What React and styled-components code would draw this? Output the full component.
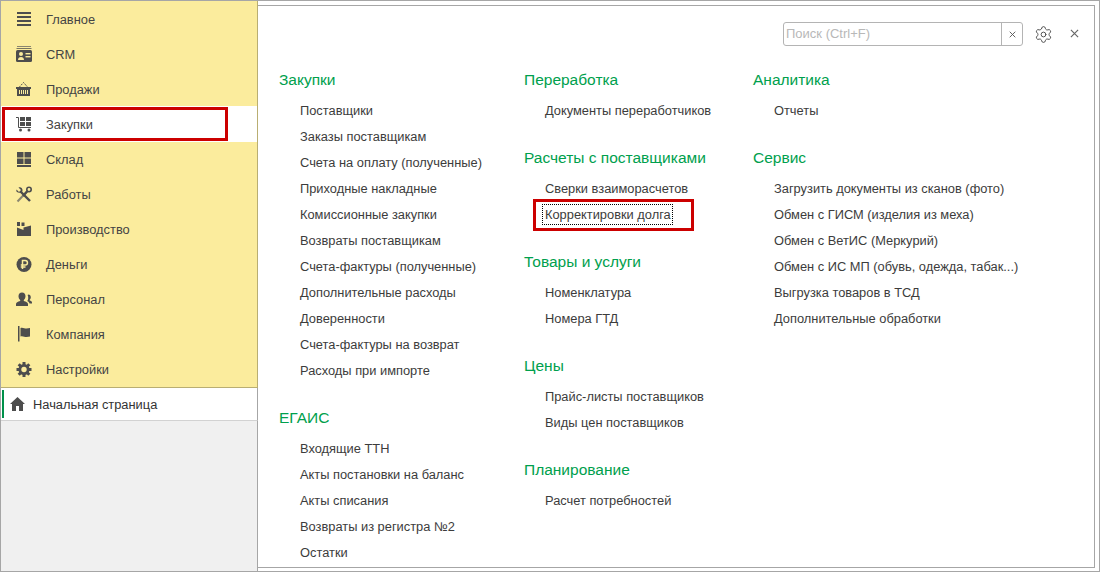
import React from 'react';
import styled, {createGlobalStyle} from 'styled-components';
import {Settings} from 'lucide-react';

const GlobalStyle = createGlobalStyle`
  html, body {
    margin: 0;
    padding: 0;
    background: #fff;
  }
  body {
    font-family: "Liberation Sans", Arial, sans-serif;
  }
`;

const Frame = styled.div`
  box-sizing: border-box;
  width: 1100px;
  height: 572px;
  border: 1px solid #a6a6a6;
  display: flex;
  overflow: hidden;
  background: #fff;
`;

const Sidebar = styled.aside`
  width: 257px;
  flex: none;
  display: flex;
  flex-direction: column;
`;

const Sections = styled.nav`
  background: #fbec9d;
  padding-top: 1px;
  border-right: 1px solid #b9ae72;
  border-bottom: 1px solid #b9ae72;
`;

const SectionRow = styled.div`
  position: relative;
  height: 35px;
  display: flex;
  align-items: center;
  padding-left: 14px;
  gap: 13px;
  font-size: 12.85px;
  color: #444;
  background: ${p => (p.$active ? '#fff' : 'transparent')};
  box-shadow: ${p => (p.$active ? '0 -1px 0 #fff' : 'none')};
  svg {
    flex: none;
  }
`;

const RedMark = styled.span`
  position: absolute;
  box-sizing: border-box;
  border: 3px solid #cc0000;
  pointer-events: none;
`;

const SideMark = styled(RedMark)`
  left: 1px;
  top: 0;
  width: 226px;
  height: 34px;
`;

const HomeTab = styled.div`
  height: 32px;
  display: flex;
  align-items: center;
  background: #fff;
  border-right: 1px solid #a6a6a6;
  border-bottom: 1px solid #d2d2d2;
  font-size: 12.85px;
  color: #333;
`;

const GreenBar = styled.span`
  width: 2px;
  height: 28px;
  margin-left: 1px;
  margin-right: 6px;
  background: #00904a;
`;

const HomeLabel = styled.span`
  margin-left: 8px;
`;

const SideRest = styled.div`
  flex: 1;
  background: #f0f0f0;
  border-right: 1px solid #a6a6a6;
`;

const Main = styled.main`
  flex: 1;
  min-width: 0;
  padding: 4px 4px 3px 0;
  display: flex;
`;

const Panel = styled.section`
  flex: 1;
  min-width: 0;
  border: 1px solid #a6a6a6;
  border-left: none;
  overflow: hidden;
`;

const Toolbar = styled.div`
  height: 56px;
  box-sizing: border-box;
  padding: 16px 14px 0 0;
  display: flex;
  justify-content: flex-end;
  align-items: flex-start;
`;

const Search = styled.div`
  box-sizing: border-box;
  width: 240px;
  height: 24px;
  border: 1px solid #b4b4b4;
  border-radius: 3px;
  display: flex;
  font-size: 13px;
  color: #b8b8b8;
`;

const SearchText = styled.div`
  flex: 1;
  line-height: 22px;
  padding-left: 2px;
`;

const SearchClear = styled.div`
  width: 20px;
  border-left: 1px solid #b4b4b4;
  display: flex;
  align-items: center;
  justify-content: center;
`;

const GearButton = styled.div`
  display: flex;
  margin: 3px 16px 0 11px;
  color: #4d4d4d;
`;

const CloseButton = styled.div`
  width: 11px;
  height: 11px;
  margin-top: 6px;
  display: flex;
  align-items: center;
  justify-content: center;
`;

const Columns = styled.div`
  display: grid;
  grid-template-columns: 245px 229px 1fr;
  padding-left: 21px;
`;

const Column = styled.div`
  display: flex;
  flex-direction: column;
  gap: 16px;
`;

const Heading = styled.h3`
  margin: 0;
  height: 36px;
  line-height: 35px;
  font-size: 15.5px;
  font-weight: normal;
  color: #00a04d;
`;

const Item = styled.div`
  position: relative;
  height: 26px;
  line-height: 26px;
  padding-left: 21px;
  font-size: 12.85px;
  color: #3c3c3c;
  white-space: nowrap;
`;

const FocusText = styled.span`
  display: inline-block;
  line-height: 19px;
  outline: 1px dotted #000;
  outline-offset: 0;
  padding: 0 1px 0 2px;
  margin-left: -2px;
`;

const ItemMark = styled(RedMark)`
  left: 9px;
  top: -3px;
  width: 161px;
  height: 32px;
`;

const fill = '#4d4d4d';

const Icon = ({children}) => (
  <svg width="18" height="17" viewBox="0 0 18 17" fill={fill}>{children}</svg>
);

const MenuIcon = () => (
  <Icon>
    <rect x="2" y="1" width="14" height="2"/>
    <rect x="2" y="5" width="14" height="2"/>
    <rect x="2" y="9" width="14" height="2"/>
    <rect x="2" y="13" width="14" height="2"/>
  </Icon>
);

const CrmIcon = () => (
  <Icon>
    <rect x="2" y="0" width="14" height="1" fill="#8a8670"/>
    <rect x="1.5" y="2" width="15" height="1" fill="#77745f"/>
    <rect x="1" y="4" width="16" height="12" rx="1.5"/>
    <circle cx="6" cy="8" r="2" fill="#fbec9d"/>
    <path d="M3 14c0-2 1.2-3 3-3s3 1 3 3z" fill="#fbec9d"/>
    <rect x="10.5" y="7" width="5" height="1.4" fill="#fbec9d"/>
    <rect x="10.5" y="10" width="5" height="1.4" fill="#fbec9d"/>
  </Icon>
);

const BasketIcon = () => (
  <Icon>
    <path d="M4 6.5 8.5 1.5 13 6.5" fill="none" stroke={fill} strokeDasharray="2 1"/>
    <rect x="1" y="6" width="15" height="2"/>
    <rect x="2" y="8" width="13" height="7"/>
    <path d="M4.5 9v4M6.5 9v4M8.5 9v4M10.5 9v4M12.5 9v4" stroke="#fbec9d"/>
  </Icon>
);

const CartIcon = () => (
  <Icon>
    <path d="M1 1.5h2.5v10H16" fill="none" stroke={fill}/>
    <rect x="5" y="1" width="5" height="4"/>
    <rect x="11" y="1" width="5" height="4"/>
    <rect x="5" y="6" width="5" height="4"/>
    <rect x="11" y="6" width="5" height="4"/>
    <circle cx="5.5" cy="14" r="1.5"/>
    <circle cx="14" cy="14" r="1.5"/>
  </Icon>
);

const StockIcon = () => (
  <Icon>
    <rect x="2" y="1" width="6.5" height="5.5"/>
    <rect x="9.5" y="1" width="6.5" height="5.5"/>
    <rect x="2" y="7.5" width="6.5" height="5.5"/>
    <rect x="9.5" y="7.5" width="6.5" height="5.5"/>
    <rect x="2" y="14" width="14" height="2"/>
  </Icon>
);

const ToolsIcon = () => (
  <Icon>
    <path d="M2.5 15.500 12 5.500" stroke="#8a8670" strokeWidth="2" fill="none"/>
    <path d="M6 6 15 15" stroke={fill} strokeWidth="2.400" fill="none"/>
    <path d="M1.500 3.500 4 6l2-2-2.500-2.500C5.500.5 8 2 7.500 5L6 7 3 6.500C1.500 6 1 5 1.500 3.500z"/>
    <circle cx="14" cy="3.500" r="2.200" fill="none" stroke={fill} strokeWidth="1.600"/>
    <path d="M12.500 5 8 10" stroke={fill} strokeWidth="2.200"/>
  </Icon>
);

const FactoryIcon = () => (
  <Icon>
    <path d="M2 1h3v4H2zM6.500 1.500h3V5h-3z"/>
    <path d="M2 15V6.500l6.500 2.500V6.500L16 4.500V15z"/>
  </Icon>
);

const RubleIcon = () => (
  <Icon>
    <circle cx="9" cy="8.500" r="7.500"/>
    <path d="M7.500 13V4.500H10.200a2.200 2.200 0 0 1 0 4.500H5.800M5.800 11H10.500" fill="none" stroke="#fbec9d" strokeWidth="1.500"/>
  </Icon>
);

const StaffIcon = () => (
  <Icon>
    <path d="M7 1.500c2.200 0 3.500 1.600 3.500 3.700 0 1.500-.7 3-1.700 3.800v1c2.400.6 4.200 1.700 4.200 3v2H1v-2c0-1.300 1.800-2.400 4.200-3V9c-1-.8-1.700-2.300-1.700-3.800 0-2.100 1.300-3.700 3.500-3.700z"/>
    <path d="M13.500 3.500c1.400 0 2.300 1.200 2.300 2.700 0 1-.5 2-1.100 2.500v.8c1.300.4 2.300 1 2.300 2v1h-2.500c-.3-1-1-1.800-2.300-2.400.7-1 1.100-2.100 1-3.400 0-1-.1-1.800-.6-2.600.3-.4.500-.6.900-.6z"/>
  </Icon>
);

const FlagIcon = () => (
  <Icon>
    <rect x="3" y="0" width="1.500" height="15.500"/>
    <path d="M5.500 2c2.200-.8 4 .6 6 .6 1.300 0 2.300-.4 3.500-.6v8.500c-1.200.2-2.200.6-3.500.6-2 0-3.800-1.400-6-.6z"/>
  </Icon>
);

const GearIcon = () => (
  <Icon>
    {[0, 45, 90, 135].map(a => (
      <rect key={a} x="7.500" y="1" width="3" height="15" transform={`rotate(${a} 9 8.500)`}/>
    ))}
    <circle cx="9" cy="8.500" r="5.500"/>
    <circle cx="9" cy="8.500" r="2.700" fill="#fbec9d"/>
  </Icon>
);

const HomeIcon = () => (
  <svg width="15" height="14" viewBox="0 0 15 14" fill={fill}>
    <path d="M7.500 0 15 7h-2v7H9V9H6v5H2V7H0z"/>
  </svg>
);

const Cross = ({size, color}) => (
  <svg width={size} height={size} viewBox="0 0 10 10" stroke={color} strokeWidth="1.300" fill="none">
    <path d="M1 1 9 9M9 1 1 9"/>
  </svg>
);

const sections = [
  {title: 'Главное', icon: <MenuIcon/>},
  {title: 'CRM', icon: <CrmIcon/>},
  {title: 'Продажи', icon: <BasketIcon/>},
  {title: 'Закупки', icon: <CartIcon/>, active: true},
  {title: 'Склад', icon: <StockIcon/>},
  {title: 'Работы', icon: <ToolsIcon/>},
  {title: 'Производство', icon: <FactoryIcon/>},
  {title: 'Деньги', icon: <RubleIcon/>},
  {title: 'Персонал', icon: <StaffIcon/>},
  {title: 'Компания', icon: <FlagIcon/>},
  {title: 'Настройки', icon: <GearIcon/>},
];

const columns = [
  [
    {title: 'Закупки', items: ['Поставщики', 'Заказы поставщикам', 'Счета на оплату (полученные)', 'Приходные накладные', 'Комиссионные закупки', 'Возвраты поставщикам', 'Счета-фактуры (полученные)', 'Дополнительные расходы', 'Доверенности', 'Счета-фактуры на возврат', 'Расходы при импорте']},
    {title: 'ЕГАИС', items: ['Входящие ТТН', 'Акты постановки на баланс', 'Акты списания', 'Возвраты из регистра №2', 'Остатки']},
  ],
  [
    {title: 'Переработка', items: ['Документы переработчиков']},
    {title: 'Расчеты с поставщиками', items: ['Сверки взаиморасчетов', 'Корректировки долга']},
    {title: 'Товары и услуги', items: ['Номенклатура', 'Номера ГТД']},
    {title: 'Цены', items: ['Прайс-листы поставщиков', 'Виды цен поставщиков']},
    {title: 'Планирование', items: ['Расчет потребностей']},
  ],
  [
    {title: 'Аналитика', items: ['Отчеты']},
    {title: 'Сервис', items: ['Загрузить документы из сканов (фото)', 'Обмен с ГИСМ (изделия из меха)', 'Обмен с ВетИС (Меркурий)', 'Обмен с ИС МП (обувь, одежда, табак...)', 'Выгрузка товаров в ТСД', 'Дополнительные обработки']},
  ],
];

const FOCUSED = 'Корректировки долга';

export default function App() {
  return (
    <Frame>
      <GlobalStyle/>
      <Sidebar>
        <Sections>
          {sections.map(s => (
            <SectionRow key={s.title} $active={s.active}>
              {s.icon}
              <span>{s.title}</span>
              {s.active && <SideMark/>}
            </SectionRow>
          ))}
        </Sections>
        <HomeTab>
          <GreenBar/>
          <HomeIcon/>
          <HomeLabel>Начальная страница</HomeLabel>
        </HomeTab>
        <SideRest/>
      </Sidebar>
      <Main>
        <Panel>
          <Toolbar>
            <Search>
              <SearchText>Поиск (Ctrl+F)</SearchText>
              <SearchClear><Cross size={7} color="#555"/></SearchClear>
            </Search>
            <GearButton><Settings size={19} strokeWidth={1.2}/></GearButton>
            <CloseButton><Cross size={9} color="#666"/></CloseButton>
          </Toolbar>
          <Columns>
            {columns.map((groups, i) => (
              <Column key={i}>
                {groups.map(g => (
                  <div key={g.title}>
                    <Heading>{g.title}</Heading>
                    {g.items.map(t => (
                      <Item key={t}>
                        {t === FOCUSED ? <FocusText>{t}</FocusText> : t}
                        {t === FOCUSED && <ItemMark/>}
                      </Item>
                    ))}
                  </div>
                ))}
              </Column>
            ))}
          </Columns>
        </Panel>
      </Main>
    </Frame>
  );
}
